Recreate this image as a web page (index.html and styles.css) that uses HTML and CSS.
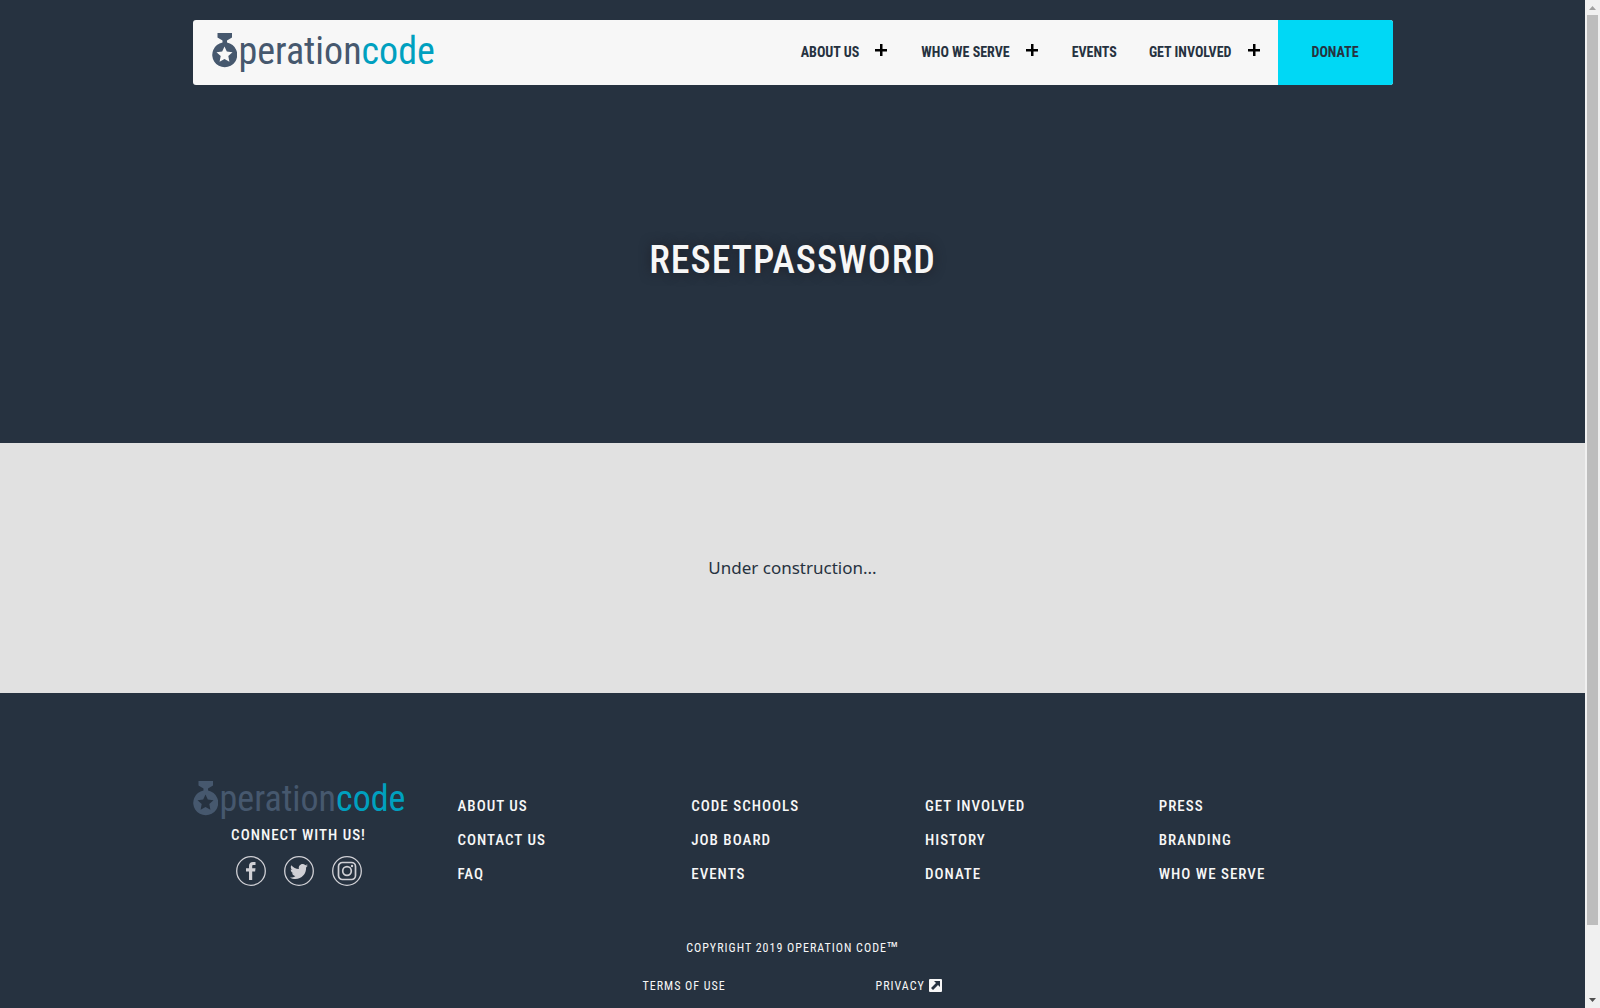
FILE: index.html
```html
<!DOCTYPE html>
<html lang="en">
<head>
<meta charset="utf-8">
<title>Reset Password | Operation Code</title>
<link rel="stylesheet" href="styles.css">
</head>
<body>
<svg class="defs" aria-hidden="true">
  <symbol id="medal" viewBox="0 0 25 35">
    <path fill="currentColor" fill-rule="evenodd" d="M5.500 0h14.500v4.500l-5 3v2a12.500 12.500 0 1 1-4.500 0v-2l-5-3zM12.500 13.500l-2.300 5.100-5.700.7 4.200 3.800-1.100 5.600 4.900-2.800 4.900 2.800-1.100-5.600 4.200-3.800-5.700-.7z"/>
  </symbol>
  <symbol id="plus" viewBox="0 0 12 12"><path d="M5 0h2.500v5H12v2.500H7.500V12H5V7.500H0V5h5z"/></symbol>
</svg>
<div class="page">
  <section class="hero">
    <header class="bar">
      <a class="logo" href="#" aria-label="Operation Code"><svg class="medal"><use href="#medal"/></svg><span>peration<b>code</b></span></a>
      <nav class="nav">
        <a href="#">About Us</a><button aria-label="Open About Us"><svg><use href="#plus"/></svg></button>
        <a href="#">Who We Serve</a><button aria-label="Open Who We Serve"><svg><use href="#plus"/></svg></button>
        <a href="#">Events</a>
        <a href="#">Get Involved</a><button aria-label="Open Get Involved"><svg><use href="#plus"/></svg></button>
      </nav>
      <a class="donate" href="#">Donate</a>
    </header>
    <h1>ResetPassword</h1>
  </section>
  <main class="content"><p>Under construction...</p></main>
  <footer class="footer">
    <div class="top">
      <div class="brand">
        <a class="logo small" href="#" aria-label="Operation Code"><svg class="medal"><use href="#medal"/></svg><span>peration<b>code</b></span></a>
        <p>Connect with us!</p>
        <div class="social">
          <a href="#" aria-label="Facebook"><svg viewBox="0 0 30 30"><circle cx="15" cy="15" r="14.300"/><path d="M13 24v-8.500h-3v-3.300h3V10c0-2.800 1.500-4 4-4h2.500v3h-2c-1 0-1.300.5-1.300 1.300v1.900h3.300l-.4 3.300h-2.900V24z"/></svg></a>
          <a href="#" aria-label="Twitter"><svg viewBox="0 0 30 30"><circle cx="15" cy="15" r="14.300"/><path d="M24 9.500l-1.900 2.100C22.400 18 17.700 23 11.500 23c-2 0-3.900-.6-5.500-1.600 2 .2 3.900-.4 5.400-1.500-1.600 0-3-1.100-3.400-2.600h1.600C7.900 16.900 6.700 15.400 6.700 13.600l1.700.5C6.800 13 6.300 10.900 7.300 9.200c1.900 2.200 4.600 3.600 7.600 3.800-.6-2.500 1.200-4.900 3.700-4.900 1.100 0 2 .4 2.700 1.100l2.300-.9-1.500 1.900z"/></svg></a>
          <a href="#" aria-label="Instagram"><svg viewBox="0 0 30 30"><circle cx="15" cy="15" r="14.300"/><rect x="6.500" y="6.500" width="17" height="17" rx="4"/><circle class="lens" cx="15" cy="15" r="4.300"/><circle class="dot" cx="20" cy="10" r="1.200"/></svg></a>
        </div>
      </div>
      <ul><li><a href="#">About Us</a></li><li><a href="#">Contact Us</a></li><li><a href="#">FAQ</a></li></ul>
      <ul><li><a href="#">Code Schools</a></li><li><a href="#">Job Board</a></li><li><a href="#">Events</a></li></ul>
      <ul><li><a href="#">Get Involved</a></li><li><a href="#">History</a></li><li><a href="#">Donate</a></li></ul>
      <ul><li><a href="#">Press</a></li><li><a href="#">Branding</a></li><li><a href="#">Who We Serve</a></li></ul>
    </div>
    <p class="copyright">Copyright 2019 Operation Code<span class="tm">™</span></p>
    <div class="legal">
      <a href="#">Terms of Use</a>
      <a href="#">Privacy <svg viewBox="0 0 13 13"><rect width="13" height="13" rx="1"/><path d="M5 2h6v6L9 6l-5 5-2-2 5-5z"/></svg></a>
    </div>
  </footer>
</div>
<div class="scrollbar" aria-hidden="true">
  <svg viewBox="0 0 15 15" fill="#a0a0a0"><path d="M4 10l3.500-4L11 10z"/></svg>
  <div class="track"><div class="thumb"></div></div>
  <svg viewBox="0 0 15 15" fill="#505050"><path d="M4 5l3.500 4L11 5z"/></svg>
</div>
</body>
</html>
```
FILE: styles.css
```css
* { box-sizing: border-box; }
body { display: grid; grid-template-columns: 1fr 15px; height: 100vh; margin: 0; overflow: hidden; font-family: "Roboto Condensed", "Liberation Sans Narrow", sans-serif; }
a { color: inherit; text-decoration: none; }
p, h1, ul { margin: 0; padding: 0; }
ul { list-style: none; }
.defs { display: none; }
.page { height: 100vh; overflow-y: auto; scrollbar-width: none; color: #f7f7f7; background: #263240; }

.scrollbar { display: flex; flex-direction: column; height: 100vh; background: #f0f0f0; }
.scrollbar svg { width: 15px; height: 15px; }
.track { flex: 1; padding: 0 2px; }
.thumb { height: 93%; background: #bdbdbd; }

.hero { display: flex; flex-direction: column; align-items: center; height: 443px; padding: 20px 0 8px; }
.bar { display: flex; flex: none; width: 100%; max-width: 1200px; height: 65px; border-radius: 3px; overflow: hidden; background: #f7f7f7; color: #263240; }
.logo { display: flex; align-items: flex-start; gap: 2px; color: #46586e; font-size: 38px; line-height: 40px; margin: 11px auto 0 19px; }
.logo b { color: #00a0bf; font-weight: 400; }
.medal { flex: none; width: 25px; height: 35px; margin-top: 2px; }
.nav { display: flex; align-items: center; padding-bottom: 2px; font-size: 14px; font-weight: 700; text-transform: uppercase; }
.nav a { padding: 0 16px; }
.nav button { width: 30px; height: 12px; padding: 0 18px 0 0; margin: 0 0 4px; border: 0; background: none; }
.nav svg { display: block; width: 12px; height: 12px; }
.donate { display: flex; align-items: center; justify-content: center; width: 115px; padding-bottom: 2px; font-size: 14px; font-weight: 700; text-transform: uppercase; background: #00d8f5; }
h1 { margin: auto; font-size: 38px; line-height: 48px; font-weight: 500; letter-spacing: 1px; text-transform: uppercase; text-shadow: 0 0 12px #1f1f26; }

.content { display: flex; align-items: center; justify-content: center; height: 250px; background: #e1e1e1; color: #263240; font: 17px/24px "Noto Sans", sans-serif; }

.footer { padding: 88px 24px 80px; text-transform: uppercase; letter-spacing: 1px; font-size: 15px; font-weight: 500; }
.top { display: grid; grid-template-columns: 265px repeat(4, 1fr); max-width: 1200px; margin: 0 auto; }
.top ul { padding-top: 8px; line-height: 34px; }
.brand { width: 212px; text-align: center; line-height: 24px; }
.logo.small { margin: 0; font-size: 36px; font-weight: 400; line-height: 36px; height: 42px; letter-spacing: 0; text-transform: none; }
.small .medal { width: 25px; height: 35px; margin-top: 0; }
.social { display: flex; justify-content: center; gap: 18px; margin-top: 9px; }
.social svg { display: block; width: 30px; height: 30px; fill: #d0d0d5; }
.social circle, .social rect { fill: none; stroke: #d0d0d5; stroke-width: 1.3; }
.social .lens, .social rect { stroke-width: 1.7; }
.social .dot { fill: #d0d0d5; stroke: none; }
.copyright { margin-top: 45px; text-align: center; font-size: 12px; line-height: 24px; font-weight: 400; }
.tm { font: 14px/1 "Noto Sans", sans-serif; }
.legal { display: grid; grid-template-columns: 233px 67px; justify-content: center; font-size: 12px; font-weight: 400; line-height: 24px; margin-top: 14px; white-space: nowrap; }
.legal svg { width: 13px; height: 13px; vertical-align: -2px; fill: #f7f7f7; }
.legal path { fill: #263240; }
```
